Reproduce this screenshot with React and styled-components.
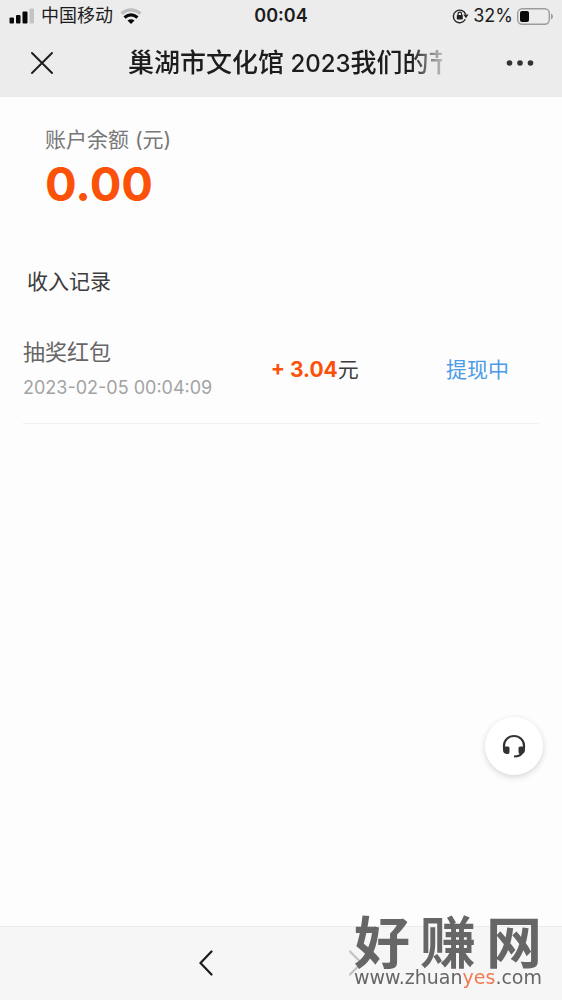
import React from "react";
import styled, { createGlobalStyle } from "styled-components";

const GlobalStyle = createGlobalStyle`
  * { box-sizing: border-box; }
  body {
    margin: 0;
    background: #fdfdfd;
    color: #3c3c3c;
    font-family: Inter, "Noto Sans CJK SC", sans-serif;
  }
  h1, h2, h3, p, ul { margin: 0; padding: 0; font-weight: 400; }
  ul { list-style: none; }
  button { padding: 0; border: 0; background: none; color: inherit; font: inherit; cursor: pointer; }
  svg { display: block; }
`;

const Page = styled.div`
  display: flex;
  flex-direction: column;
  min-height: 100vh;
`;

const Header = styled.header`
  background: #ececec;
  color: #1c1c1c;
`;

const StatusBar = styled.div`
  display: grid;
  grid-template-columns: 1fr auto 1fr;
  align-items: center;
  height: 32px;
  padding: 0 9px;
  font-size: 18px;
  line-height: 24px;
`;

const StatusGroup = styled.div`
  display: flex;
  align-items: center;
  justify-content: ${(p) => (p.$end ? "flex-end" : "flex-start")};
  gap: ${(p) => (p.$end ? 4 : 7)}px;
`;

const Clock = styled.time`
  font-size: 18px;
  font-weight: 600;
`;

const NavBar = styled.div`
  display: flex;
  align-items: center;
  justify-content: space-between;
  height: 65px;
  padding: 0 26px 3px;
`;

const IconButton = styled.button`
  display: grid;
  place-items: center;
  width: 32px;
  height: 32px;
  flex: none;
  &:disabled { color: #c2c2c2; }
`;

const Title = styled.h1`
  flex: 0 1 314px;
  margin-left: 8px;
  overflow: hidden;
  white-space: nowrap;
  font-size: 26px;
  line-height: 42px;
  font-weight: 500;
  mask-image: linear-gradient(to right, #000 90%, transparent 103%);
`;

const TitleYear = styled.span`
  font-size: 24px;
`;

const Main = styled.main`
  flex: 1;
  padding: 27px 23px 0;
`;

const Balance = styled.section`
  padding: 0 22px;
`;

const BalanceLabel = styled.h2`
  color: #777;
  font-size: 21px;
  line-height: 32px;
`;

const BalanceAmount = styled.p`
  color: #fc5108;
  font-size: 47px;
  line-height: 56px;
  font-weight: 700;
`;

const RecordsTitle = styled.h2`
  margin-top: 54px;
  padding: 0 4px;
  font-size: 21px;
  line-height: 32px;
`;

const Record = styled.li`
  display: grid;
  grid-template-columns: 48% 34% 1fr;
  align-items: center;
  margin-top: 36px;
  padding-bottom: 17px;
  border-bottom: 1px solid #f0f0f0;
`;

const RecordName = styled.h3`
  color: #666;
  font-size: 22px;
  line-height: 36px;
`;

const RecordTime = styled.time`
  display: block;
  color: #a3a3a3;
  font-size: 18px;
  line-height: 36px;
`;

const RecordAmount = styled.p`
  font-size: 21px;
  line-height: 32px;
  strong { color: #fc5108; font-weight: 700; }
`;

const RecordStatus = styled.p`
  color: #4c9be8;
  font-size: 21px;
  line-height: 32px;
`;

const SupportButton = styled.button`
  position: fixed;
  right: 19px;
  bottom: 225px;
  display: grid;
  place-items: center;
  width: 58px;
  height: 58px;
  border-radius: 50%;
  background: #fff;
  box-shadow: 0 2px 6px rgba(0, 0, 0, 0.16);
`;

const BottomBar = styled.nav`
  display: flex;
  align-items: center;
  justify-content: center;
  gap: 118px;
  height: 74px;
  padding-bottom: 2px;
  border-top: 1px solid #ebebeb;
  background: #f6f6f6;
  color: #1c1c1c;
`;

const Watermark = styled.div`
  position: fixed;
  right: 20px;
  bottom: 13px;
  display: flex;
  flex-direction: column;
  color: #666;
`;

const WatermarkName = styled.div`
  display: flex;
  justify-content: space-between;
  font-size: 56px;
  line-height: 48px;
  font-weight: 700;
`;

const WatermarkUrl = styled.span`
  font-family: "DejaVu Sans", sans-serif;
  font-size: 19px;
  line-height: 20px;
  b { color: #f27b55; font-weight: 400; }
`;

const Signal = () => (
  <svg width="25" height="16" viewBox="0 0 25 16" aria-hidden="true">
    <rect x="0.500" y="9.500" width="4.500" height="6" rx="1" fill="#080808" />
    <rect x="7" y="7" width="4.500" height="8.500" rx="1" fill="#080808" />
    <rect x="13.500" y="3.500" width="5" height="12" rx="1" fill="#080808" />
    <rect x="20.500" y="0.500" width="4.500" height="15" rx="1" fill="#c4c4c4" />
  </svg>
);

const Wifi = () => (
  <svg width="22" height="17" viewBox="0 0 22 17" fill="none" aria-hidden="true">
    <path d="M1.500 5.500Q11-1.800 20.500 5.500" stroke="#bebebe" strokeWidth="3.200" />
    <path d="M4.500 9.400Q11 4.200 17.500 9.400" stroke="#080808" strokeWidth="3.200" />
    <path d="M7.500 12.500Q11 9.800 14.500 12.500L11 16Z" fill="#080808" />
  </svg>
);

const RotationLock = () => (
  <svg width="17" height="16" viewBox="0 0 17 16" fill="none" stroke="#222" aria-hidden="true">
    <path d="M13.300 11.300A6.300 6.300 0 1 1 13.600 6.300" strokeWidth="1.400" />
    <path d="M11.300 6.600h5.200l-2.500 3.600z" fill="#222" stroke="none" />
    <rect x="4.800" y="7" width="6" height="4.500" rx="0.700" fill="#222" stroke="none" />
    <path d="M6 7.500V6a1.800 1.800 0 0 1 3.600 0v1.500" strokeWidth="1.200" />
  </svg>
);

const Battery = () => (
  <svg width="36" height="17" viewBox="0 0 36 17" fill="none" aria-hidden="true">
    <rect x="0.700" y="0.700" width="31.600" height="15.600" rx="4.500" stroke="#9c9c9c" strokeWidth="1.400" />
    <rect x="3" y="3" width="9" height="11" rx="2" fill="#080808" />
    <path d="M34 5.500q2 .8 2 3t-2 3z" fill="#9c9c9c" />
  </svg>
);

const Close = () => (
  <svg width="22" height="22" viewBox="0 0 22 22" stroke="currentColor" strokeWidth="1.900" strokeLinecap="round" aria-hidden="true">
    <path d="M1 1l20 20M21 1L1 21" />
  </svg>
);

const More = () => (
  <svg width="28" height="8" viewBox="0 0 28 8" fill="#333" aria-hidden="true">
    <circle cx="3.500" cy="4" r="2.800" />
    <circle cx="14" cy="4" r="2.800" />
    <circle cx="24.500" cy="4" r="2.800" />
  </svg>
);

const Headset = () => (
  <svg width="24" height="24" viewBox="0 0 24 24" fill="none" aria-hidden="true">
    <path d="M2 13.500V11.500a10 9.500 0 0 1 20 0v2" stroke="#333" strokeWidth="2.200" />
    <path d="M1 12.500h5q1.500 0 1.500 1.500v4Q7.500 20 6 20H4.500Q1 19.500 1 16zM23 12.500h-5q-1.500 0-1.500 1.500v4q0 2 1.500 2h1.500q3.500-.5 3.500-4z" fill="#333" />
    <path d="M20.500 18.500q-2 4-8.500 4" stroke="#333" strokeWidth="2" />
  </svg>
);

const Chevron = ({ forward }) => (
  <svg width="14" height="26" viewBox="0 0 14 26" fill="none" stroke="currentColor" strokeWidth="2.200" strokeLinecap="round" aria-hidden="true">
    <path d={forward ? "M1 1.500L12.500 13 1 24.500" : "M12.500 1.500L1.500 13 12.500 24.500"} />
  </svg>
);

export default function App() {
  return (
    <Page>
      <GlobalStyle />
      <Header>
        <StatusBar>
          <StatusGroup>
            <Signal />
            <span>中国移动</span>
            <Wifi />
          </StatusGroup>
          <Clock>00:04</Clock>
          <StatusGroup $end>
            <RotationLock />
            <span>32%</span>
            <Battery />
          </StatusGroup>
        </StatusBar>
        <NavBar>
          <IconButton aria-label="关闭"><Close /></IconButton>
          <Title>巢湖市文化馆<TitleYear> 2023</TitleYear>我们的节</Title>
          <IconButton aria-label="更多"><More /></IconButton>
        </NavBar>
      </Header>
      <Main>
        <Balance>
          <BalanceLabel>账户余额 (元)</BalanceLabel>
          <BalanceAmount>0.00</BalanceAmount>
        </Balance>
        <RecordsTitle>收入记录</RecordsTitle>
        <ul>
          <Record>
            <div>
              <RecordName>抽奖红包</RecordName>
              <RecordTime>2023-02-05 00:04:09</RecordTime>
            </div>
            <RecordAmount><strong>+ 3.04</strong>元</RecordAmount>
            <RecordStatus>提现中</RecordStatus>
          </Record>
        </ul>
      </Main>
      <BottomBar>
        <IconButton aria-label="后退"><Chevron /></IconButton>
        <IconButton aria-label="前进" disabled><Chevron forward /></IconButton>
      </BottomBar>
      <SupportButton aria-label="客服"><Headset /></SupportButton>
      <Watermark>
        <WatermarkName><span>好</span><span>赚</span><span>网</span></WatermarkName>
        <WatermarkUrl>www.zhuan<b>yes</b>.com</WatermarkUrl>
      </Watermark>
    </Page>
  );
}
